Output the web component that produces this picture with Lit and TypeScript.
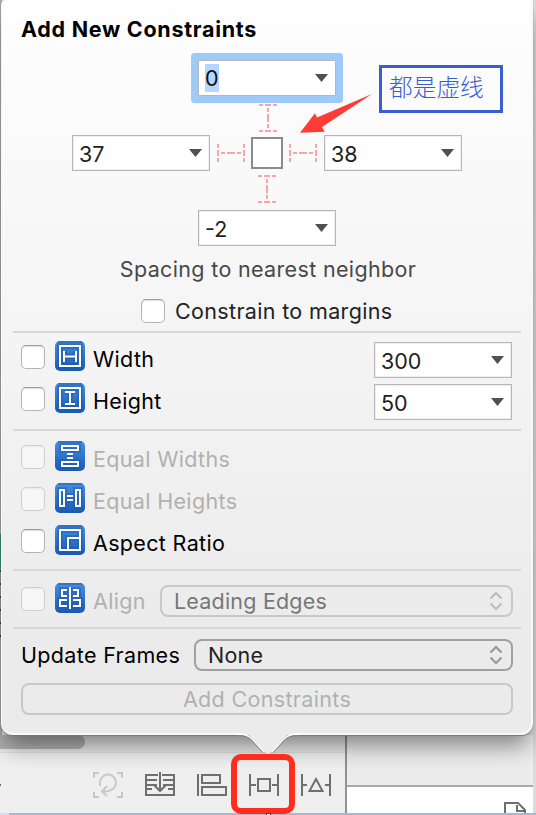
import { LitElement, html, css, svg } from "lit";
import { customElement, property } from "lit/decorators.js";
import { classMap } from "lit/directives/class-map.js";

const glyphs: Record<string, string> = {
  width: "M5 5H25V25H5Z M9 10V21 M21 10V21 M9 15.5H21",
  height: "M5 5H25V25H5Z M10 9H20 M10 21H20 M15 9V21",
  equalWidths: "M7 5H23V9H7Z M12 13H18 M12 17H18 M7 21H23V25H7Z",
  equalHeights: "M5 7H9V23H5Z M12 13H18 M12 17H18 M21 7H25V23H21Z",
  aspect: "M5 5H25V25H5Z M13 25V13H25",
  align: "M15 4V26 M12 7H7V13H12 M12 17H5V23H12 M18 7H23V13H18 M18 17H25V23H18",
};

@customElement("check-box")
class CheckBox extends LitElement {
  @property({ type: Boolean, reflect: true }) disabled = false;
  static styles = css`
    :host { display: block; flex: none; box-sizing: border-box; width: 24px; height: 24px; border-radius: 5px;
      border: 1px solid #b4b4b4; border-top-color: #9c9c9c; background: #fff; box-shadow: inset 0 1px 1px #dedede; }
    :host([disabled]) { background: #f6f6f6; border-color: #cfcfcf; box-shadow: inset 0 1px 1px #ececec; }
  `;
  render() { return html``; }
}

@customElement("combo-box")
class ComboBox extends LitElement {
  @property() value = "";
  @property({ type: Boolean, reflect: true }) focused = false;
  static styles = css`
    :host { display: flex; box-sizing: border-box; width: 138px; height: 36px; align-items: center; justify-content: space-between;
      border: 1px solid #b6b6b6; background: #fff; box-shadow: inset 0 0 0 1px #f0f0f0; padding: 0 7px 0 6px; color: #222;
      letter-spacing: 0; }
    :host([focused]) { box-shadow: 0 0 0 7px #9ecafa; border-radius: 1px; }
    .value { line-height: 28px; padding-top: 2px; }
    :host([focused]) .value { background: #b3d7ff; padding: 0; color: #111; }
    svg { display: block; }
  `;
  render() {
    return html`<span class="value">${this.value}</span>
      <svg width="13" height="8"><path d="M0 0H13L6.5 8Z" fill="#505050" /></svg>`;
  }
}

@customElement("popup-button")
class PopupButton extends LitElement {
  @property({ type: Boolean, reflect: true }) disabled = false;
  static styles = css`
    :host { display: flex; box-sizing: border-box; height: 32px; align-items: center; justify-content: space-between;
      border: 2px solid #a0a0a0; border-radius: 8px; padding: 0 8px 0 12px; color: #222; letter-spacing: .2px; }
    :host([disabled]) { border-color: #c8c8c8; color: #777; }
    svg { display: block; fill: none; stroke: #999; stroke-width: 2.2; }
    :host([disabled]) svg { stroke: #bdbdbd; }
  `;
  render() {
    return html`<slot></slot><svg width="14" height="20"><path d="M1.5 7.5L7 2L12.5 7.5 M1.5 12.5L7 18L12.5 12.5" /></svg>`;
  }
}

@customElement("app-root")
class AppRoot extends LitElement {
  static styles = css`
    :host { display: block; width: 536px; height: 815px; position: relative; overflow: hidden; background: #dcdcdc;
      font: 21.5px/28px Inter, "Noto Sans", sans-serif; letter-spacing: .34px; color: #000; }
    * { box-sizing: border-box; }
    svg { display: block; flex: none; }
    .popover { position: relative; z-index: 2; width: 532px; margin-left: 1px; height: 735px; padding: 15px 20px 0 19px;
      border: solid #f8f8f8; border-width: 0 2px 2px 1px; border-radius: 5px 0 12px 12px;
      background: linear-gradient(#fefefe 0, #f5f5f5 320px, #ebebeb 640px);
      box-shadow: 0 1px 1px #777, 0 14px 24px -4px #0007; }
    .edge { position: absolute; left: 0; top: 0; width: 2px; height: 735px;
      background: linear-gradient(#aaa 534px, #31906b 534px, #31906b 569px, #0000 569px, #0000 640px, #aaa 640px),
        repeating-linear-gradient(#999 0 11px, #333 11px 13px); }
    .title { height: 28px; font-weight: 700; letter-spacing: .72px; white-space: nowrap; }
    .spacing { display: grid; grid-template-columns: 138px 41px 32px 41px 138px; grid-template-rows: 36px 41px 32px 41px 36px;
      width: 390px; margin: 17px 0 0 51px; place-items: center; }
    .north { grid-area: 1 / 2 / 2 / 5; } .north-strut { grid-area: 2 / 3; margin: 2px 0 0 2px; }
    .west { grid-area: 3 / 1; } .west-strut { grid-area: 3 / 2; }
    .square { grid-area: 3 / 3; width: 32px; height: 32px; border: 2px solid #8c8c8c; background: #fff; }
    .east-strut { grid-area: 3 / 4; margin-right: 1px; } .east { grid-area: 3 / 5; }
    .south-strut { grid-area: 4 / 3; margin-bottom: 1px; } .south { grid-area: 5 / 2 / 6 / 5; }
    .strut { fill: none; stroke: #f8a5aa; stroke-width: 2; }
    .caption { margin: 9px 0 0 4px; text-align: center; height: 28px; color: #484848; white-space: nowrap; }
    .margins { display: flex; align-items: center; margin: 14px 0 6px 120px; height: 28px; gap: 10px; color: #222; white-space: nowrap; }
    .rule { height: 2px; margin: 0 -10px 0 -8px; background: #d7d7d7; }
    .rows { padding: 7px 0; }
    .rows.first { padding: 3px 0 9px; }
    .rows.second { padding: 5px 0 7px; }
    .row { display: flex; align-items: center; height: 42px; white-space: nowrap; }
    .row .label { margin: 4px 0 0 8px; }
    .row .tile { margin: -3px 0 0 10px; }
    .row check-box { margin-top: -1px; }
    .row combo-box { margin: 5px -1px 0 auto; }
    .off { color: #b1b1b1; }
    .row popup-button { width: 353px; margin: 4px -2px 0 auto; }
    .update { display: flex; align-items: center; height: 32px; margin: 10px 0 12px; }
    .update popup-button { width: 319px; margin: 0 -2px 0 auto; }
    .update span { white-space: nowrap; }
    .add { display: flex; align-items: center; justify-content: center; height: 32px; margin: 0 -2px 0 0; border: 2px solid #c8c8c8;
      border-radius: 8px; color: #b1b1b1; }
    .tail { position: absolute; z-index: 3; left: 236px; top: 730px; }
    .callout { position: absolute; z-index: 4; left: 379px; top: 65px; width: 124px; height: 48px; border: 3px solid #3a5dd2;
      color: #3a5dd2; font: 300 23.7px/37px "Noto Sans CJK SC", sans-serif; letter-spacing: 0; padding-left: 7px; white-space: nowrap; }
    .pointer { position: absolute; z-index: 4; left: 298px; top: 92px; }
    .dock { display: grid; grid-template-columns: 345px 188px; height: 78px; }
    .canvas { background: #efefef; }
    .track { height: 18px; background: #e9e9e9; border-bottom: 1px solid #dedede; }
    .thumb { width: 85px; height: 14px; background: #b2b2b2; border-radius: 0 7px 7px 0; }
    .tools { display: flex; align-items: center; gap: 22px; padding-top: 3px; height: 60px; }
    .dot { width: 1px; height: 2px; margin-right: 70px; background: #666; }
    .tool { fill: none; stroke: #6f6f6f; stroke-width: 2; overflow: visible; }
    .dim { stroke: #c8c8c8; }
    .side { border-left: 2px solid #929292; background: #ececec; }
    .bar { height: 52px; border-bottom: 2px solid #aaa; }
    .files { height: 26px; background: #fff; display: flex; justify-content: flex-end; padding: 15px 7px 0 0; overflow: hidden; }
    .base { height: 2px; background: linear-gradient(90deg, #d6dfea 9px, #a9b8cc 9px); }
    .handle { position: absolute; z-index: 5; left: 266px; top: 813px; width: 5px; height: 4px; border: 1px solid #444; background: #fff; }
    .mark { position: absolute; z-index: 4; left: 231px; top: 754px; width: 64px; height: 60px; border: 6px solid #ff2d1e; border-radius: 10px; }
  `;

  tile(name: string) {
    return html`<svg class="tile" width="30" height="30" viewBox="0 0 30 30" fill="none">
      <defs><linearGradient id="g" x2="0" y2="1"><stop stop-color="#468fe4" /><stop offset="1" stop-color="#195ab4" /></linearGradient></defs>
      <rect width="30" height="30" rx="5" fill="url(#g)" />
      <path d="M3 1H27" stroke="#3472c2" stroke-width="2" />
      <path d=${glyphs[name]} stroke="#1d56a5" stroke-opacity=".5" stroke-width="5.5" />
      <path d=${glyphs[name]} stroke="#fff" stroke-width="2" />
    </svg>`;
  }

  row(icon: string, label: string, value = "", disabled = false) {
    return html`<div class="row">
      <check-box ?disabled=${disabled}></check-box>${this.tile(icon)}
      <span class=${classMap({ label: true, off: disabled })}>${label}</span>
      ${value ? html`<combo-box .value=${value}></combo-box>` : ""}
    </div>`;
  }

  strut(side: string, vertical: boolean) {
    const dashes = svg`<path d="M1 0V4M1 6V12M1 14V18M27 0V4M27 6V12M27 14V18M4 9H8M10 9H18M20 9H24" transform=${vertical ? "matrix(0 1 1 0 0 0)" : "translate(0 0)"} />`;
    return html`<svg class="strut ${side}-strut" width=${vertical ? 18 : 28} height=${vertical ? 28 : 18}>${dashes}</svg>`;
  }

  render() {
    return html`
      <div class="edge"></div>
      <section class="popover">
        <div class="title">Add New Constraints</div>
        <div class="spacing">
          <combo-box class="north" value="0" focused></combo-box>
          ${this.strut("north", true)}
          <combo-box class="west" value="37"></combo-box>
          ${this.strut("west", false)}
          <div class="square"></div>
          ${this.strut("east", false)}
          <combo-box class="east" value="38"></combo-box>
          ${this.strut("south", true)}
          <combo-box class="south" value="-2"></combo-box>
        </div>
        <div class="caption">Spacing to nearest neighbor</div>
        <div class="margins"><check-box></check-box><span>Constrain to margins</span></div>
        <div class="rule"></div>
        <div class="rows first">${this.row("width", "Width", "300")}${this.row("height", "Height", "50")}</div>
        <div class="rule"></div>
        <div class="rows second">
          ${this.row("equalWidths", "Equal Widths", "", true)}
          ${this.row("equalHeights", "Equal Heights", "", true)}
          ${this.row("aspect", "Aspect Ratio")}
        </div>
        <div class="rule"></div>
        <div class="rows"><div class="row">
          <check-box disabled></check-box>${this.tile("align")}<span class="label off">Align</span>
          <popup-button disabled>Leading Edges</popup-button>
        </div></div>
        <div class="rule"></div>
        <div class="update"><span>Update Frames</span><popup-button>None</popup-button></div>
        <div class="add">Add Constraints</div>
      </section>

      <svg class="tail" width="64" height="26">
        <path d="M0 3V0H64V3C54 3 50 5 44 12L35 22Q32 25 29 22L20 12C14 5 10 3 0 3Z" fill="#ebebeb" />
        <path d="M0 4C10 4 14 6 20 13L28 22M64 4C54 4 50 6 44 13L36 22" fill="none" stroke="#fff" stroke-width="1.5" />
        <path d="M0 5.5C9 5.5 13 7 19 14L27 23M64 5.5C55 5.5 51 7 45 14L37 23" fill="none" stroke="#888" stroke-width="1" />
      </svg>

      <div class="callout">都是虚线</div>
      <svg class="pointer" width="76" height="44"><path d="M74 2L19 25.5L17 21.3L2 40.8L26.7 39.7L24 35Z" fill="#ff3b36" /></svg>

      <div class="dock">
        <div class="canvas">
          <div class="track"><div class="thumb"></div></div>
          <div class="tools">
            <div class="dot"></div>
            <svg class="tool dim" width="30" height="26"><path d="M6 1H1V6M24 1H29V6M1 20V25H6M29 20V25H24M7 14V11A8 8 0 1 1 18 18Q15 20 10 19.5M14 14L9 19.5L14 24" /></svg>
            <svg class="tool" width="30" height="26"><path d="M13 3H1V23H29V3H17M1 8H12M18 8H29M1 13H12M18 13H29M1 17H7M23 17H29M15 0V19M9 13L15 19L21 13" /></svg>
            <svg class="tool" width="30" height="26"><path d="M1 2V24M5 3H23V11H5ZM5 15H29V23H5Z" /></svg>
            <svg class="tool" width="30" height="26"><path d="M1 2V24M29 2V24M9 7H21V19H9ZM1 13H7M23 13H29" /></svg>
            <svg class="tool" width="30" height="26"><path d="M1 2V24M29 2V24M1 13H6M24 13H29M15 7L8.5 19H21.5Z" /></svg>
          </div>
        </div>
        <div class="side">
          <div class="bar"></div>
          <div class="files"><svg class="tool" width="22" height="24"><path d="M1 24V1H14L21 8V24M13 3V9H20" /></svg></div>
        </div>
      </div>
      <div class="base"></div>
      <div class="mark"></div>
      <div class="handle"></div>
    `;
  }
}
